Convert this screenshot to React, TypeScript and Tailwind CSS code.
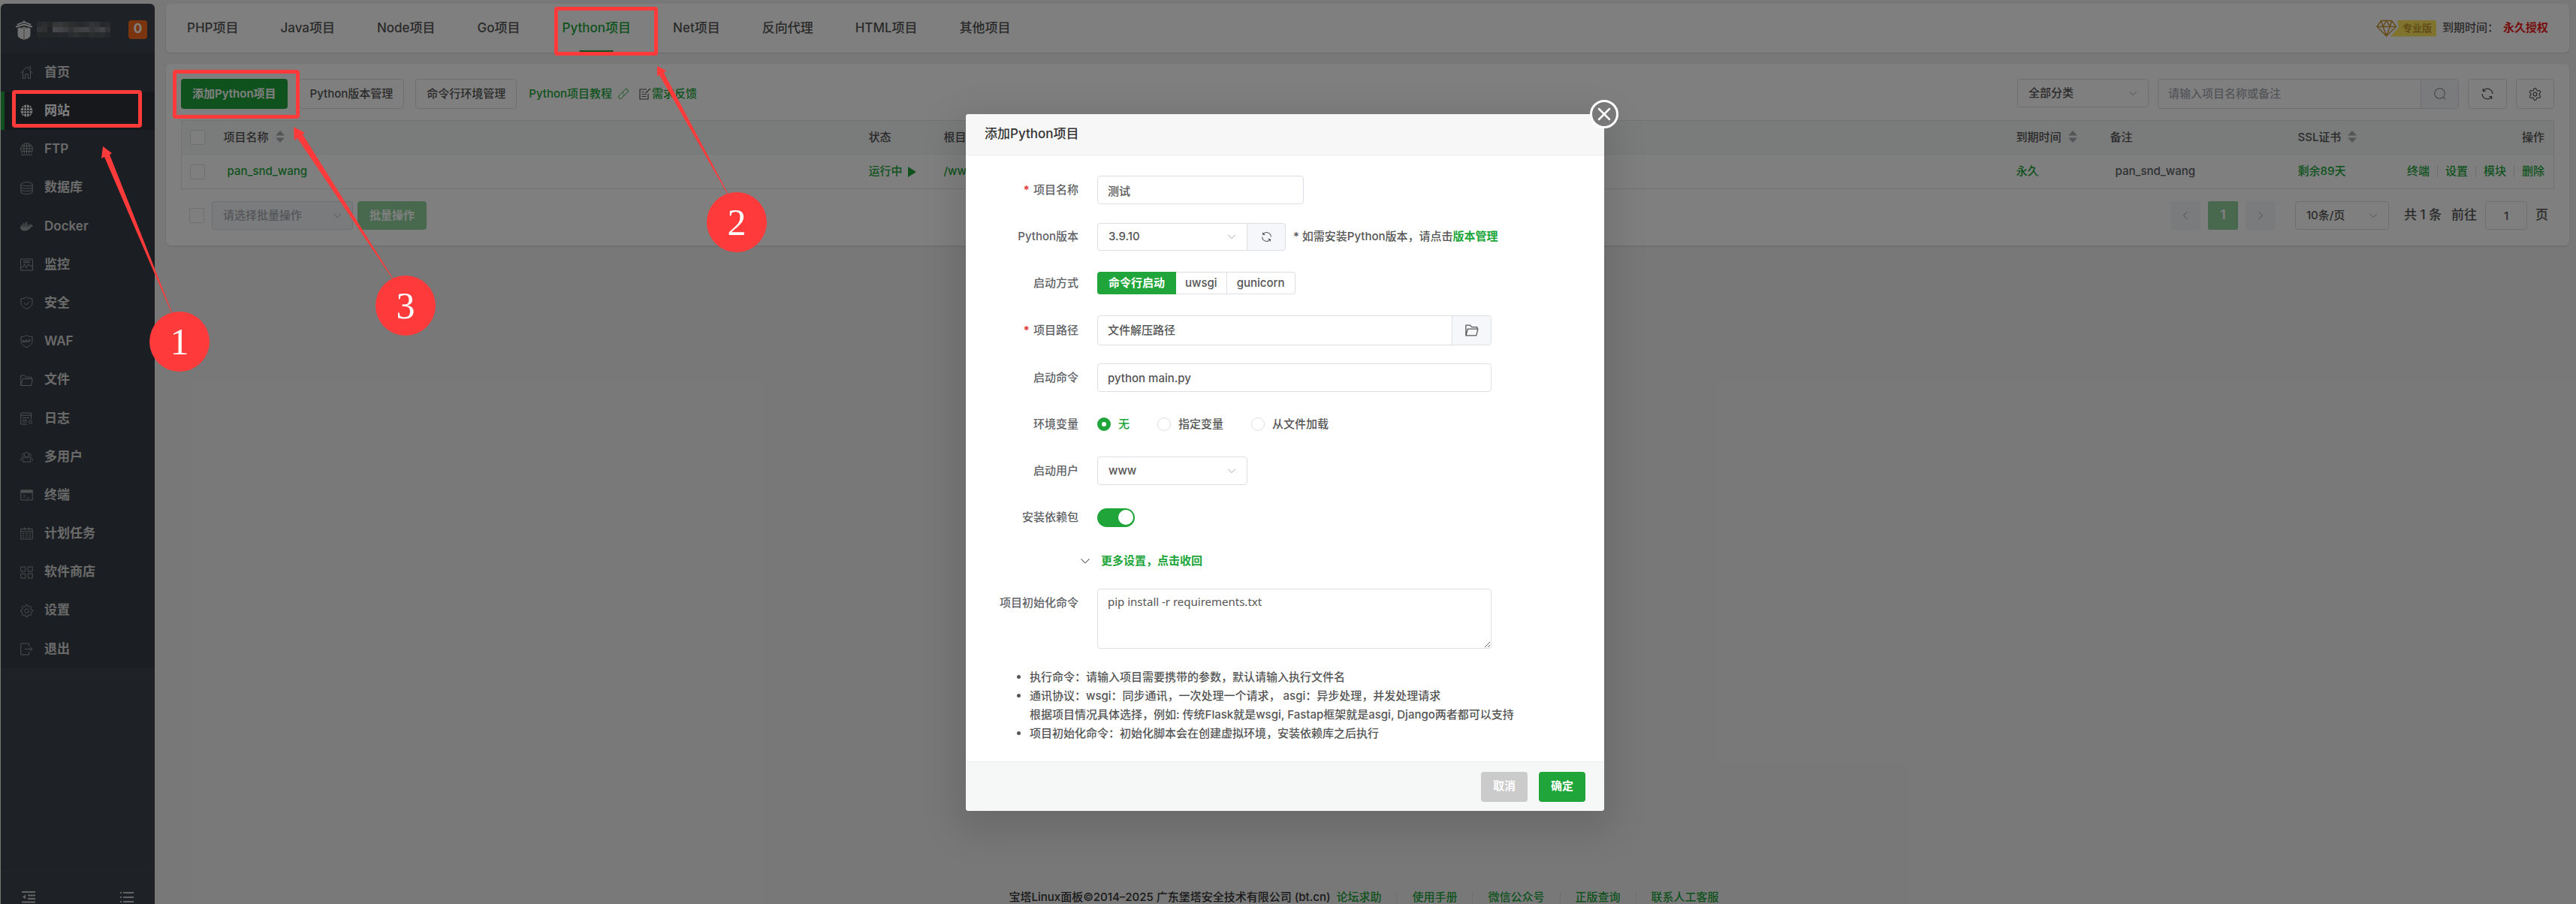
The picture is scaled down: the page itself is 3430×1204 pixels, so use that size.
import type { ReactNode } from "react";
import { Settings } from "lucide-react";
import { FaDocker } from "react-icons/fa";

const gear = (cx: number, cy: number, inner: number, outer: number, teeth: number) => {
  const points: string[] = [];
  const step = (Math.PI * 2) / teeth;
  for (let i = 0; i < teeth; i++) {
    const a = i * step - Math.PI / 2;
    [
      [-0.3, inner],
      [-0.2, outer],
      [0.2, outer],
      [0.3, inner],
    ].forEach(([offset, r]) => {
      points.push(`${(cx + r * Math.cos(a + offset * step)).toFixed(2)},${(cy + r * Math.sin(a + offset * step)).toFixed(2)}`);
    });
  }
  return points.join(" ");
};

const MENU: { label: string; icon: ReactNode }[] = [
  { label: "首页", icon: <path d="M.8 9.3 8.5 1l7.7 8.3M3.5 7v9.3h3.2v-5.6h3.6v5.6h3.2V7M11 1.2h2.6v3" /> },
  {
    label: "网站",
    icon: (
      <>
        <circle cx="8.5" cy="8.5" r="8" fill="currentColor" stroke="none" />
        <path stroke="#2c3138" d="M0 8.5h17M1 4.8h15M1 12.2h15M8.5 0v17M4.8 1v15M12.2 1v15" />
      </>
    ),
  },
  { label: "FTP", icon: <path d="M3 14.5a8 8 0 1 1 11 0M1 16.2h15M.8 8h15.4M2 4.5h13M2 11.5h13M8.5.7v14M5.5 1.6C4.5 6 4.5 10 5.7 14.4M11.5 1.6c1 4.4 1 8.4-.2 12.8" /> },
  { label: "数据库", icon: <path d="M.8 3.5c0-3.8 15.4-3.8 15.4 0v10.3c0 3.4-15.4 3.4-15.4 0zM.8 3.5c0 3 15.4 3 15.4 0M.8 7c0 3 15.4 3 15.4 0M.8 10.4c0 3 15.4 3 15.4 0" /> },
  { label: "Docker", icon: null },
  { label: "监控", icon: <path d="M.6 1h15.8v15H.6zM4 3.5h9M4 5.5h9M.6 12h3l2-4.5 2.3 5.5 2.6-5.5 1.5 2.5 1.5-1 1 2h1.800" /> },
  { label: "安全", icon: <path d="M8.5.7c2.500 1.500 4.500 2 7.500 2.100v5.700c0 4-3.500 6.500-7.500 8-4-1.500-7.500-4-7.500-8V2.800C4 2.700 6 2.200 8.500.7zM5 8.500l2.800 2.700 4.500-4.400" /> },
  {
    label: "WAF",
    icon: (
      <>
        <path d="M8.5.7c2.500 1.300 4.500 1.800 7.500 1.900v6c0 4-3.500 6.500-7.500 8-4-1.500-7.500-4-7.500-8v-6C4 2.500 6 2 8.500.7z" />
        <path d="m3 6.500.9 3.600.9-2.600.9 2.600.9-3.600M7.300 10.100l1.400-3.600 1.400 3.600M7.800 9h1.800M11.400 10.100V6.500h2.400M11.400 8.400h2" />
      </>
    ),
  },
  { label: "文件", icon: <path d="M.8 15.500V2h4.700l2 2.300h7.300v2.200M.8 15.500 3.300 6.500h13L14.500 15.500z" /> },
  {
    label: "日志",
    icon: (
      <>
        <path d="M9.500 16H.8V1h13.700v8.500M.8 4.200h13.700M3 7.500h9M3 10.500h6" />
        <circle cx="13.500" cy="13" r="2" />
        <path d="M3 13h6" />
      </>
    ),
  },
  { label: "多用户", icon: <path d="M8.500 2.500a3.200 3.200 0 1 1 0 6.400 3.200 3.200 0 0 1 0-6.400zM3.500 15.200c-1.500-5 2.500-6.300 5-6.300s6.500 1.300 5 6.300zM4.600 8.200C2 8 2 4 4.900 4M3.600 8.600C1.800 9 .8 10.800.7 13.500M12.400 8.200C15 8 15 4 12.100 4M13.400 8.600c1.800.4 2.800 2.200 2.900 4.900" /> },
  {
    label: "终端",
    icon: (
      <>
        <path d="M.8 2h15.400v13H.8z" />
        <path d="M.8 2h15.400v3H.8z" fill="currentColor" />
        <path d="m4 7.500 2.800 2.200L4 12M8.500 12h4" />
      </>
    ),
  },
  { label: "计划任务", icon: <path d="M.8 2.500h15.400V16H.8zM.8 5.800h15.400M5.500.5v3.300M11.500.5v3.300M3 8.300h2.500M7.200 8.300h2.600M11.500 8.300H14M3 10.800h2.500M7.200 10.800h2.600M11.500 10.800H14M3 13.300h2.500M7.200 13.300h2.600M11.500 13.300H14" /> },
  { label: "软件商店", icon: <path d="M.8 1h6v6h-6zM10.200 1h6v6h-6zM.8 10h6v6h-6zM10.200 10h6v6h-6z" /> },
  {
    label: "设置",
    icon: (
      <>
        <polygon points={gear(8.5, 8.5, 6.2, 8, 8)} />
        <circle cx="8.500" cy="8.500" r="2.700" />
      </>
    ),
  },
  { label: "退出", icon: <path d="M11.500 4.500V1H.8v15h10.700v-3.500M5.500 8.500h10.300M12.800 5.500l3.200 3-3.200 3" /> },
];

const TABS = ["PHP项目", "Java项目", "Node项目", "Go项目", "Python项目", "Net项目", "反向代理", "HTML项目", "其他项目"];

const FOOTER_LINKS = ["论坛求助", "使用手册", "微信公众号", "正版查询", "联系人工客服"];

const MASK_ROWS = [
  ["#50545a", "#595d62", "#4c5055", "#686c70", "#6c7075", "#62666b", "#585c61", "#54585c", "#4e5257", "#575b60", "#666a70", "#5f6368", "#4d5156", "#50545a"],
  ["#62666b", "#5c6065", "#44484e", "#8c9196", "#858a90", "#797e84", "#64696e", "#767b81", "#7d8388", "#7f858a", "#686c71", "#747980", "#80858b", "#62666c"],
  ["#484c51", "#464a4f", "#44484d", "#484c51", "#4d5156", "#4b4f54", "#55595e", "#5a5e63", "#4f5358", "#4c5055", "#565a5f", "#505459", "#55595e", "#4a4e53"],
];

function Glyph({ d, className }: { d: string; className: string }) {
  return (
    <svg viewBox="0 0 1024 1024" fill="currentColor" className={className} aria-hidden="true">
      <path d={d} />
    </svg>
  );
}

const ARROW_DOWN =
  "M831.872 340.864 512 652.672 192.128 340.864a30.592 30.592 0 0 0-42.752 0 29.12 29.12 0 0 0 0 41.6L489.664 714.24a32 32 0 0 0 44.672 0l340.288-331.712a29.12 29.12 0 0 0 0-41.728 30.592 30.592 0 0 0-42.752 0z";
const REFRESH =
  "M771.776 794.88A384 384 0 0 1 128 512h64a320 320 0 0 0 555.712 216.448H654.72a32 32 0 1 1 0-64h149.056a32 32 0 0 1 32 32v148.928a32 32 0 1 1-64 0v-50.56zM276.288 295.616h92.992a32 32 0 0 1 0 64H220.16a32 32 0 0 1-32-32V178.56a32 32 0 0 1 64 0v50.56A384 384 0 0 1 896.128 512h-64a320 320 0 0 0-555.776-216.384z";
const SEARCH =
  "m795.904 750.72 124.992 124.928a32 32 0 0 1-45.248 45.248L750.656 795.904a416 416 0 1 1 45.248-45.248zM480 832a352 352 0 1 0 0-704 352 352 0 0 0 0 704z";
const FOLDER =
  "M878.08 448H241.92l-96 384h636.16l96-384zM832 384v-64H485.76L357.504 192H128v448l57.344-229.248A32 32 0 0 1 216.32 384H832zm-24.96 512H96a32 32 0 0 1-32-32V160a32 32 0 0 1 32-32h287.872l128.384 128H864a32 32 0 0 1 32 32v96h23.04a32 32 0 0 1 31.04 39.744l-112 448A32 32 0 0 1 807.04 896z";

function Select({ id, label, value, className, selectClassName = "" }: { id: string; label?: string; value: string; className: string; selectClassName?: string }) {
  return (
    <div className={`relative ${className}`}>
      <select
        id={id}
        aria-label={label}
        className={`h-full w-full appearance-none rounded border border-[#dcdfe6] px-[14px] text-[15px] ${selectClassName}`}
      >
        <option>{value}</option>
      </select>
      <Glyph d={ARROW_DOWN} className="pointer-events-none absolute top-1/2 right-[14px] size-[14px] -translate-y-1/2 text-[#a8abb2]" />
    </div>
  );
}

function Sidebar() {
  return (
    <aside className="mt-[5px] ml-px flex w-[205px] shrink-0 flex-col overflow-hidden rounded-t-md bg-[#3c444d]">
      <div className="flex h-[66px] items-center pt-[2px] pr-[10px] pl-[18px]">
        <svg viewBox="0 0 26 30" className="mt-[2px] h-[28px] w-[26px] shrink-0 text-[#e4e4e4]" fill="currentColor" aria-hidden="true">
          <path d="M13 .5 14.200 3 23 6.500l-.6 1.600L13 4.600 3.600 8.100 3 6.500 11.800 3zM13 6l12 3.500-.7 2L13 8.200 1.700 11.500l-.7-2z" />
          <path d="M4 12.500 8 11v2l2-2.300v2l2-2.200v17.900C7.500 27.500 4 25.500 4 22zM22 12.500 18 11v2l-2-2.300v2l-2-2.200v17.900c4.500-.9 8-2.900 8-6.400z" />
          <path d="M12 10h2v19h-2z" fill="#bdbdbd" />
        </svg>
        <div className="ml-1 grid w-[98px] grid-cols-14" aria-hidden="true">
          {MASK_ROWS.flat().map((color, i) => (
            <span key={i} className="h-[7px]" style={{ backgroundColor: color }} />
          ))}
        </div>
        <span className="ml-auto flex h-[25px] w-[25px] items-center justify-center rounded-[4px] bg-[#f56a1c] text-[17px] font-bold text-white">0</span>
      </div>
      <nav className="grid h-[819px] shrink-0 auto-rows-fr bg-[#363d45]">
        {MENU.map((item) => {
          const active = item.label === "网站";
          return (
            <a
              key={item.label}
              href="#"
              className={`flex items-center border-l-[5px] pl-[21px] text-[17px] font-semibold ${
                active ? "border-[#20a53a] bg-[#2c3138] text-white" : "border-transparent text-[#d4d4d4]"
              }`}
            >
              {item.label === "Docker" ? (
                <FaDocker className="size-[17px] text-[#9a9c9e]" />
              ) : (
                <svg viewBox="0 0 17 17" fill="none" stroke="currentColor" className={`size-[17px] ${active ? "text-white" : "text-[#9a9c9e]"}`} aria-hidden="true">
                  {item.icon}
                </svg>
              )}
              <span className="ml-[15px]">{item.label}</span>
            </a>
          );
        })}
      </nav>
      <div className="mt-auto flex h-[44px] shrink-0 justify-between border-t border-[#41484f] px-[28px] pt-[24px] text-[#c8c8c8]">
        <button type="button" aria-label="收起菜单">
          <svg viewBox="0 0 18 16" className="h-4 w-[18px]" fill="none" stroke="currentColor" strokeWidth="2">
            <path d="M0 1h18M8 5.500h10M8 10h10M0 14.500h18" />
            <path d="M5 4.500v6L1 7.500z" fill="currentColor" stroke="none" />
          </svg>
        </button>
        <button type="button" aria-label="菜单列表">
          <svg viewBox="0 0 18 16" className="h-4 w-[18px]" fill="none" stroke="currentColor" strokeWidth="2">
            <path d="M4 2h14M4 8h14M4 14h14M0 2h2M0 8h2M0 14h2" />
          </svg>
        </button>
      </div>
    </aside>
  );
}

function TopTabs() {
  return (
    <header className="flex h-[65px] items-center justify-between rounded-md bg-white pr-[28px] shadow">
      <nav className="flex h-full text-[17px] text-[#555]">
        {TABS.map((tab) => (
          <a
            key={tab}
            href="#"
            className={`relative flex h-full items-center px-[28px] ${tab === "Python项目" ? "text-[#20a53a]" : ""}`}
          >
            {tab}
            {tab === "Python项目" && <span className="absolute bottom-[1px] left-1/2 h-[2px] w-[45px] -translate-x-1/2 bg-[#20a53a]" />}
          </a>
        ))}
      </nav>
      <div className="flex items-center text-[15px] text-[#555]">
        <svg viewBox="0 0 28 24" className="h-[24px] w-[28px]" fill="none" stroke="#c99a32" strokeWidth="1.5" aria-hidden="true">
          <path d="M6.500 1.500h14l6 8L13.500 22 1 9.500zM1 9.500h25.500M9 9.500l4.500 12 5-12M9 9.500l4.500-8 5 8M6.500 1.500 9 9.500M20.500 1.500l-2 8" />
        </svg>
        <span className="-ml-[9px] flex h-[22px] items-center rounded-r-[2px] bg-[#ffe75c] pr-[6px] pl-[16px] text-[13px] text-[#b98a2c] [clip-path:polygon(9px_0,100%_0,100%_100%,0_100%,11px_10px)]">
          专业版
        </span>
        <span className="ml-[8px]">到期时间：</span>
        <span className="ml-[6px] font-bold text-[#ef2020]">永久授权</span>
      </div>
    </header>
  );
}

function Checkbox({ label }: { label: string }) {
  return <input type="checkbox" aria-label={label} className="block size-[20px] appearance-none rounded-[2px] border border-[#dcdfe6] bg-white" />;
}

function SortIcon() {
  return (
    <svg viewBox="0 0 12 16" className="ml-[9px] inline-block h-4 w-3 align-[-2px]" fill="#a8abb2" aria-hidden="true">
      <path d="M6 0l6 6.500H0zM6 16l6-6.500H0z" />
    </svg>
  );
}

function ProjectTable() {
  return (
    <table className="mt-[15px] w-full table-fixed border-collapse border border-[#e4e4e4] text-left text-[15px]">
      <colgroup>
        <col className="w-[45px]" />
        <col className="w-[859px]" />
        <col className="w-[100px]" />
        <col />
        <col className="w-[125px]" />
        <col className="w-[250px]" />
        <col className="w-[120px]" />
        <col className="w-[232px]" />
      </colgroup>
      <thead className="bg-[#f5f6f7] text-[#555]">
        <tr className="h-[45px] border-b border-[#ebeef5]">
          <th className="pl-[11px]"><Checkbox label="全选项目" /></th>
          <th className="pl-[11px] font-medium">项目名称<SortIcon /></th>
          <th className="pl-[11px] font-medium">状态</th>
          <th className="pl-[11px] font-medium">根目录</th>
          <th className="pl-[11px] font-medium">到期时间<SortIcon /></th>
          <th className="pl-[11px] font-medium">备注</th>
          <th className="pl-[11px] font-medium">SSL证书<SortIcon /></th>
          <th className="pr-[12px] text-right font-medium">操作</th>
        </tr>
      </thead>
      <tbody className="text-[#20a53a]">
        <tr className="h-[46px]">
          <td className="pl-[11px]"><Checkbox label="选择 pan_snd_wang" /></td>
          <td className="pl-[16px]"><a href="#">pan_snd_wang</a></td>
          <td className="pl-[11px]">
            <button type="button" className="flex items-center">
              运行中
              <svg viewBox="0 0 11 14" className="ml-[7px] h-[14px] w-[11px]" fill="currentColor" aria-hidden="true"><path d="M0 0l11 7L0 14z" /></svg>
            </button>
          </td>
          <td className="pl-[11px]"><a href="#">/www</a></td>
          <td className="pl-[11px]"><a href="#">永久</a></td>
          <td className="pl-[18px] text-[#606266]">pan_snd_wang</td>
          <td className="pl-[11px]"><a href="#">剩余89天</a></td>
          <td className="pr-[12px]">
            <div className="flex items-center justify-end">
              {["终端", "设置", "模块", "删除"].map((action, i) => (
                <a key={action} href="#" className={i > 0 ? "ml-[10px] flex items-center before:mr-[10px] before:h-[15px] before:w-px before:bg-[#dcdfe6]" : ""}>
                  {action}
                </a>
              ))}
            </div>
          </td>
        </tr>
      </tbody>
    </table>
  );
}

function ProjectPanel() {
  return (
    <section className="mt-[15px] rounded-md bg-white px-[20px] pt-[20px] pb-[21px] shadow">
      <div className="flex items-center text-[15px] text-[#555]">
        <button type="button" className="h-[40px] rounded bg-[#20a53a] px-[15px] font-semibold text-white">添加Python项目</button>
        <button type="button" className="ml-[15px] h-[40px] rounded border border-[#dcdfe6] px-[14px]">Python版本管理</button>
        <button type="button" className="ml-[15px] h-[40px] rounded border border-[#dcdfe6] px-[14px]">命令行环境管理</button>
        <a href="#" className="ml-[16px] flex items-center text-[#20a53a]">
          Python项目教程
          <svg viewBox="0 0 14 14" className="ml-[8px] size-[14px]" fill="none" stroke="currentColor" strokeWidth="1" aria-hidden="true">
            <path d="M6 4.500 9.200 1.300a2.400 2.400 0 0 1 3.500 3.500L9.500 8a2.400 2.400 0 0 1-3 .3M8 9.500l-3.200 3.200a2.400 2.400 0 0 1-3.500-3.500L4.500 6a2.400 2.400 0 0 1 3-.3" />
          </svg>
        </a>
        <a href="#" className="ml-[14px] flex items-center text-[#20a53a]">
          <svg viewBox="0 0 16 16" className="mr-px size-[16px]" fill="none" stroke="#555" strokeWidth="1.200" aria-hidden="true">
            <path d="M10 2H1v13h11V8M3.500 8.500h6M3.500 11.500h6M3.500 5.500h3M8.500 7 15 1" />
          </svg>
          需求反馈
        </a>
        <div className="ml-auto flex items-start gap-[12px]">
          <Select id="category" label="项目分类" value="全部分类" className="h-[38px] w-[175px]" selectClassName="bg-white" />
          <div className="flex h-[40px] w-[401px] rounded border border-[#dcdfe6]">
            <input type="search" aria-label="搜索项目" placeholder="请输入项目名称或备注" className="min-w-0 flex-1 px-[13px] placeholder:text-[#a8abb2]" />
            <button type="button" aria-label="搜索" className="flex w-[50px] items-center justify-center rounded-r border-l border-[#dcdfe6] bg-[#f5f7fa] text-[#909399]">
              <Glyph d={SEARCH} className="size-[18px]" />
            </button>
          </div>
          <button type="button" aria-label="刷新" className="flex h-[40px] w-[52px] items-center justify-center rounded border border-[#dcdfe6]">
            <Glyph d={REFRESH} className="size-[20px]" />
          </button>
          <button type="button" aria-label="列表设置" className="flex h-[40px] w-[51px] items-center justify-center rounded border border-[#dcdfe6]">
            <Settings size={19} strokeWidth={1.5} />
          </button>
        </div>
      </div>
      <ProjectTable />
      <div className="mt-[16px] flex items-center text-[15px] text-[#555]">
        <div className="pl-[11px]"><Checkbox label="全选" /></div>
        <Select id="batch" label="批量操作" value="请选择批量操作" className="ml-[10px] h-[38px] w-[188px]" selectClassName="bg-[#f5f7fa] text-[#a8abb2]" />
        <button type="button" className="ml-[6px] h-[38px] rounded bg-[#90d29d] px-[16px] font-semibold text-white">批量操作</button>
        <div className="ml-auto flex items-center pr-[8px]">
          <button type="button" aria-label="上一页" className="flex h-[38px] w-[40px] items-center justify-center rounded-[2px] bg-[#f5f7fa] text-[#a8abb2]">
            <Glyph d={ARROW_DOWN} className="size-[14px] rotate-90" />
          </button>
          <button type="button" className="ml-[10px] h-[38px] w-[40px] rounded-[2px] bg-[#90d29d] text-[17px] font-bold text-white">1</button>
          <button type="button" aria-label="下一页" className="ml-[10px] flex h-[38px] w-[40px] items-center justify-center rounded-[2px] bg-[#f5f7fa] text-[#a8abb2]">
            <Glyph d={ARROW_DOWN} className="size-[14px] -rotate-90" />
          </button>
          <Select id="page-size" label="每页条数" value="10条/页" className="ml-[26px] h-[38px] w-[125px]" selectClassName="bg-white" />
          <span className="ml-[20px] text-[17px]">共 1 条</span>
          <label htmlFor="page-jump" className="ml-[13px] text-[17px]">前往</label>
          <input id="page-jump" defaultValue="1" className="ml-[11px] h-[38px] w-[56px] rounded border border-[#dcdfe6] text-center" />
          <span className="ml-[11px] text-[17px]">页</span>
        </div>
      </div>
    </section>
  );
}

function FormRow({ label, htmlFor, required, children }: { label: string; htmlFor?: string; required?: boolean; children: ReactNode }) {
  return (
    <div className="flex min-h-[38px] items-center">
      <label htmlFor={htmlFor} className="mr-[25px] w-[125px] shrink-0 text-right text-[#606266]">
        {required && <span className="mr-[5px] font-bold text-[#e23b3b]">*</span>}
        {label}
      </label>
      {children}
    </div>
  );
}

function AddProjectDialog() {
  return (
    <div role="dialog" aria-label="添加Python项目" className="relative w-[850px] rounded bg-white text-[15px] text-[#555] shadow-[0_16px_50px_12px_rgba(0,0,0,0.12)]">
      <button type="button" aria-label="关闭" className="absolute -top-[19px] -right-[19px] flex size-[38px] items-center justify-center rounded-full border-[3px] border-white bg-[#797979]">
        <svg viewBox="0 0 18 18" className="size-[18px]" stroke="white" strokeWidth="2.500" strokeLinecap="round" aria-hidden="true">
          <path d="M2 2l14 14M16 2 2 16" />
        </svg>
      </button>
      <h2 className="flex h-[55px] items-center rounded-t border-b border-[#ebebeb] bg-[#f7f7f7] px-[25px] text-[17px] text-[#333]">添加Python项目</h2>

      <form className="pt-[27px] pb-[25px] pl-[25px]">
        <div className="flex flex-col gap-[24px]">
          <FormRow label="项目名称" htmlFor="name" required>
            <input id="name" defaultValue="测试" className="h-[38px] w-[275px] rounded border border-[#dcdfe6] px-[13px]" />
          </FormRow>
          <FormRow label="Python版本" htmlFor="version">
            <Select id="version" value="3.9.10" className="h-[37px] w-[200px]" selectClassName="rounded-r-none bg-white" />
            <button type="button" aria-label="刷新版本" className="-ml-px flex h-[37px] w-[52px] items-center justify-center rounded-r border border-[#dcdfe6] bg-[#f5f7fa]">
              <Glyph d={REFRESH} className="size-[17px]" />
            </button>
            <span className="ml-[10px]">* 如需安装Python版本，请点击<a href="#" className="font-semibold text-[#20a53a]">版本管理</a></span>
          </FormRow>
          <FormRow label="启动方式">
            <div className="flex h-[30px]">
              <button type="button" className="rounded-l bg-[#20a53a] px-[15px] font-semibold text-white">命令行启动</button>
              <button type="button" className="border-y border-r border-[#dcdfe6] px-[12px]">uwsgi</button>
              <button type="button" className="rounded-r border-y border-r border-[#dcdfe6] px-[13px]">gunicorn</button>
            </div>
          </FormRow>
          <FormRow label="项目路径" htmlFor="path" required>
            <div className="flex h-[40px] w-[525px] rounded border border-[#dcdfe6]">
              <input id="path" defaultValue="文件解压路径" className="min-w-0 flex-1 px-[13px]" />
              <button type="button" aria-label="选择目录" className="flex w-[52px] items-center justify-center rounded-r border-l border-[#dcdfe6] bg-[#f5f7fa]">
                <Glyph d={FOLDER} className="size-[20px]" />
              </button>
            </div>
          </FormRow>
          <FormRow label="启动命令" htmlFor="command">
            <input id="command" defaultValue="python main.py" className="h-[38px] w-[525px] rounded border border-[#dcdfe6] px-[13px]" />
          </FormRow>
          <FormRow label="环境变量">
            <div className="flex gap-[37px]">
              {["无", "指定变量", "从文件加载"].map((option, i) => (
                <label key={option} className={`flex items-center gap-[10px] ${i === 0 ? "text-[#20a53a]" : ""}`}>
                  <input
                    type="radio"
                    name="env"
                    defaultChecked={i === 0}
                    className="size-[18px] appearance-none rounded-full border border-[#dcdfe6] checked:border-[6px] checked:border-[#20a53a]"
                  />
                  {option}
                </label>
              ))}
            </div>
          </FormRow>
          <FormRow label="启动用户" htmlFor="user">
            <Select id="user" value="www" className="h-[38px] w-[200px]" selectClassName="bg-white" />
          </FormRow>
          <FormRow label="安装依赖包" htmlFor="deps">
            <input
              id="deps"
              type="checkbox"
              role="switch"
              defaultChecked
              className="flex h-[25px] w-[50px] appearance-none items-center justify-end rounded-full bg-[#20a53a] pr-[2px] before:size-[20px] before:rounded-full before:bg-white"
            />
          </FormRow>
        </div>
        <button type="button" className="mt-[27px] ml-[126px] flex h-[24px] items-center font-semibold text-[#20a53a]">
          <Glyph d={ARROW_DOWN} className="mr-[13px] size-[16px] text-[#555]" />
          更多设置，点击收回
        </button>
        <div className="mt-[25px] flex items-start">
          <label htmlFor="init" className="mr-[25px] w-[125px] shrink-0 pt-[8px] text-right text-[#606266]">项目初始化命令</label>
          <textarea
            id="init"
            defaultValue="pip install -r requirements.txt"
            className="h-[80px] w-[525px] rounded border border-[#dcdfe6] px-[13px] py-[5px] font-['Noto_Sans'] font-normal"
          />
        </div>
        <ul className="mt-[25px] ml-[60px] list-disc leading-[25px]">
          <li>执行命令：请输入项目需要携带的参数，默认请输入执行文件名</li>
          <li>
            通讯协议：wsgi：同步通讯，一次处理一个请求， asgi：异步处理，并发处理请求
            <br />
            根据项目情况具体选择，例如: 传统Flask就是wsgi, Fastap框架就是asgi, Django两者都可以支持
          </li>
          <li>项目初始化命令：初始化脚本会在创建虚拟环境，安装依赖库之后执行</li>
        </ul>
      </form>

      <div className="flex h-[66px] items-center justify-end gap-[15px] rounded-b border-t border-[#edf0f1] bg-[#f6f8f8] pr-[25px] font-semibold text-white">
        <button type="button" className="h-[40px] w-[62px] rounded bg-[#cbcbcb]">取消</button>
        <button type="button" className="h-[40px] w-[62px] rounded bg-[#20a53a]">确定</button>
      </div>
    </div>
  );
}

// red step markers that sit on top of everything
function StepMarkers() {
  return (
    <div className="pointer-events-none absolute inset-0 font-['Liberation_Serif',serif] text-[50px] leading-none text-white">
      <div className="absolute top-[120px] left-[16px] h-[50px] w-[173px] rounded-[4px] border-[5px] border-[#ff3a3a]" />
      <div className="absolute top-[9px] left-[738px] h-[65px] w-[138px] rounded-[4px] border-[5px] border-[#ff3a3a]" />
      <div className="absolute top-[93px] left-[230px] h-[65px] w-[169px] rounded-[4px] border-[5px] border-[#ff3a3a]" />
      <svg className="absolute inset-0 h-full w-full" fill="#ff3a3a" aria-hidden="true">
        <polygon points="137,195 149,204 146,206 229,416 228,416 139,209 135,211" />
        <polygon points="875,88 887,94 884,97 970,259 969,259 878,100 875,101" />
        <polygon points="391,169 406,177 403,179 524,372 523,372 396,184 392,187" />
      </svg>
      <div className="absolute top-[415px] left-[199px] flex size-[80px] items-center justify-center rounded-full bg-[#ff3a3a]">1</div>
      <div className="absolute top-[256px] left-[941px] flex size-[80px] items-center justify-center rounded-full bg-[#ff3a3a]">2</div>
      <div className="absolute top-[367px] left-[500px] flex size-[80px] items-center justify-center rounded-full bg-[#ff3a3a]">3</div>
    </div>
  );
}

export default function App() {
  return (
    <div className="relative flex h-screen overflow-hidden bg-[#f1f1f1] font-['Inter','Noto_Sans_CJK_SC',sans-serif] font-medium">
      <Sidebar />
      <main className="flex min-w-0 flex-1 flex-col">
        <div className="pt-[5px] pr-[9px] pl-[15px]">
          <TopTabs />
          <ProjectPanel />
        </div>
        <footer className="mt-auto flex h-[17px] items-center justify-center pr-1 text-[15px] text-[#20a53a]">
          <span className="mr-[8px] text-[#333]">宝塔Linux面板©2014–2025 广东堡塔安全技术有限公司 (bt.cn)</span>
          {FOOTER_LINKS.map((link, i) => (
            <a key={link} href="#" className={i > 0 ? "ml-[20px] flex items-center before:mr-[20px] before:h-[15px] before:w-px before:bg-[#dcdfe6]" : ""}>
              {link}
            </a>
          ))}
        </footer>
      </main>
      <div className="absolute inset-0 flex items-start justify-center bg-black/50 pt-[152px] pr-2">
        <AddProjectDialog />
      </div>
      <StepMarkers />
    </div>
  );
}
